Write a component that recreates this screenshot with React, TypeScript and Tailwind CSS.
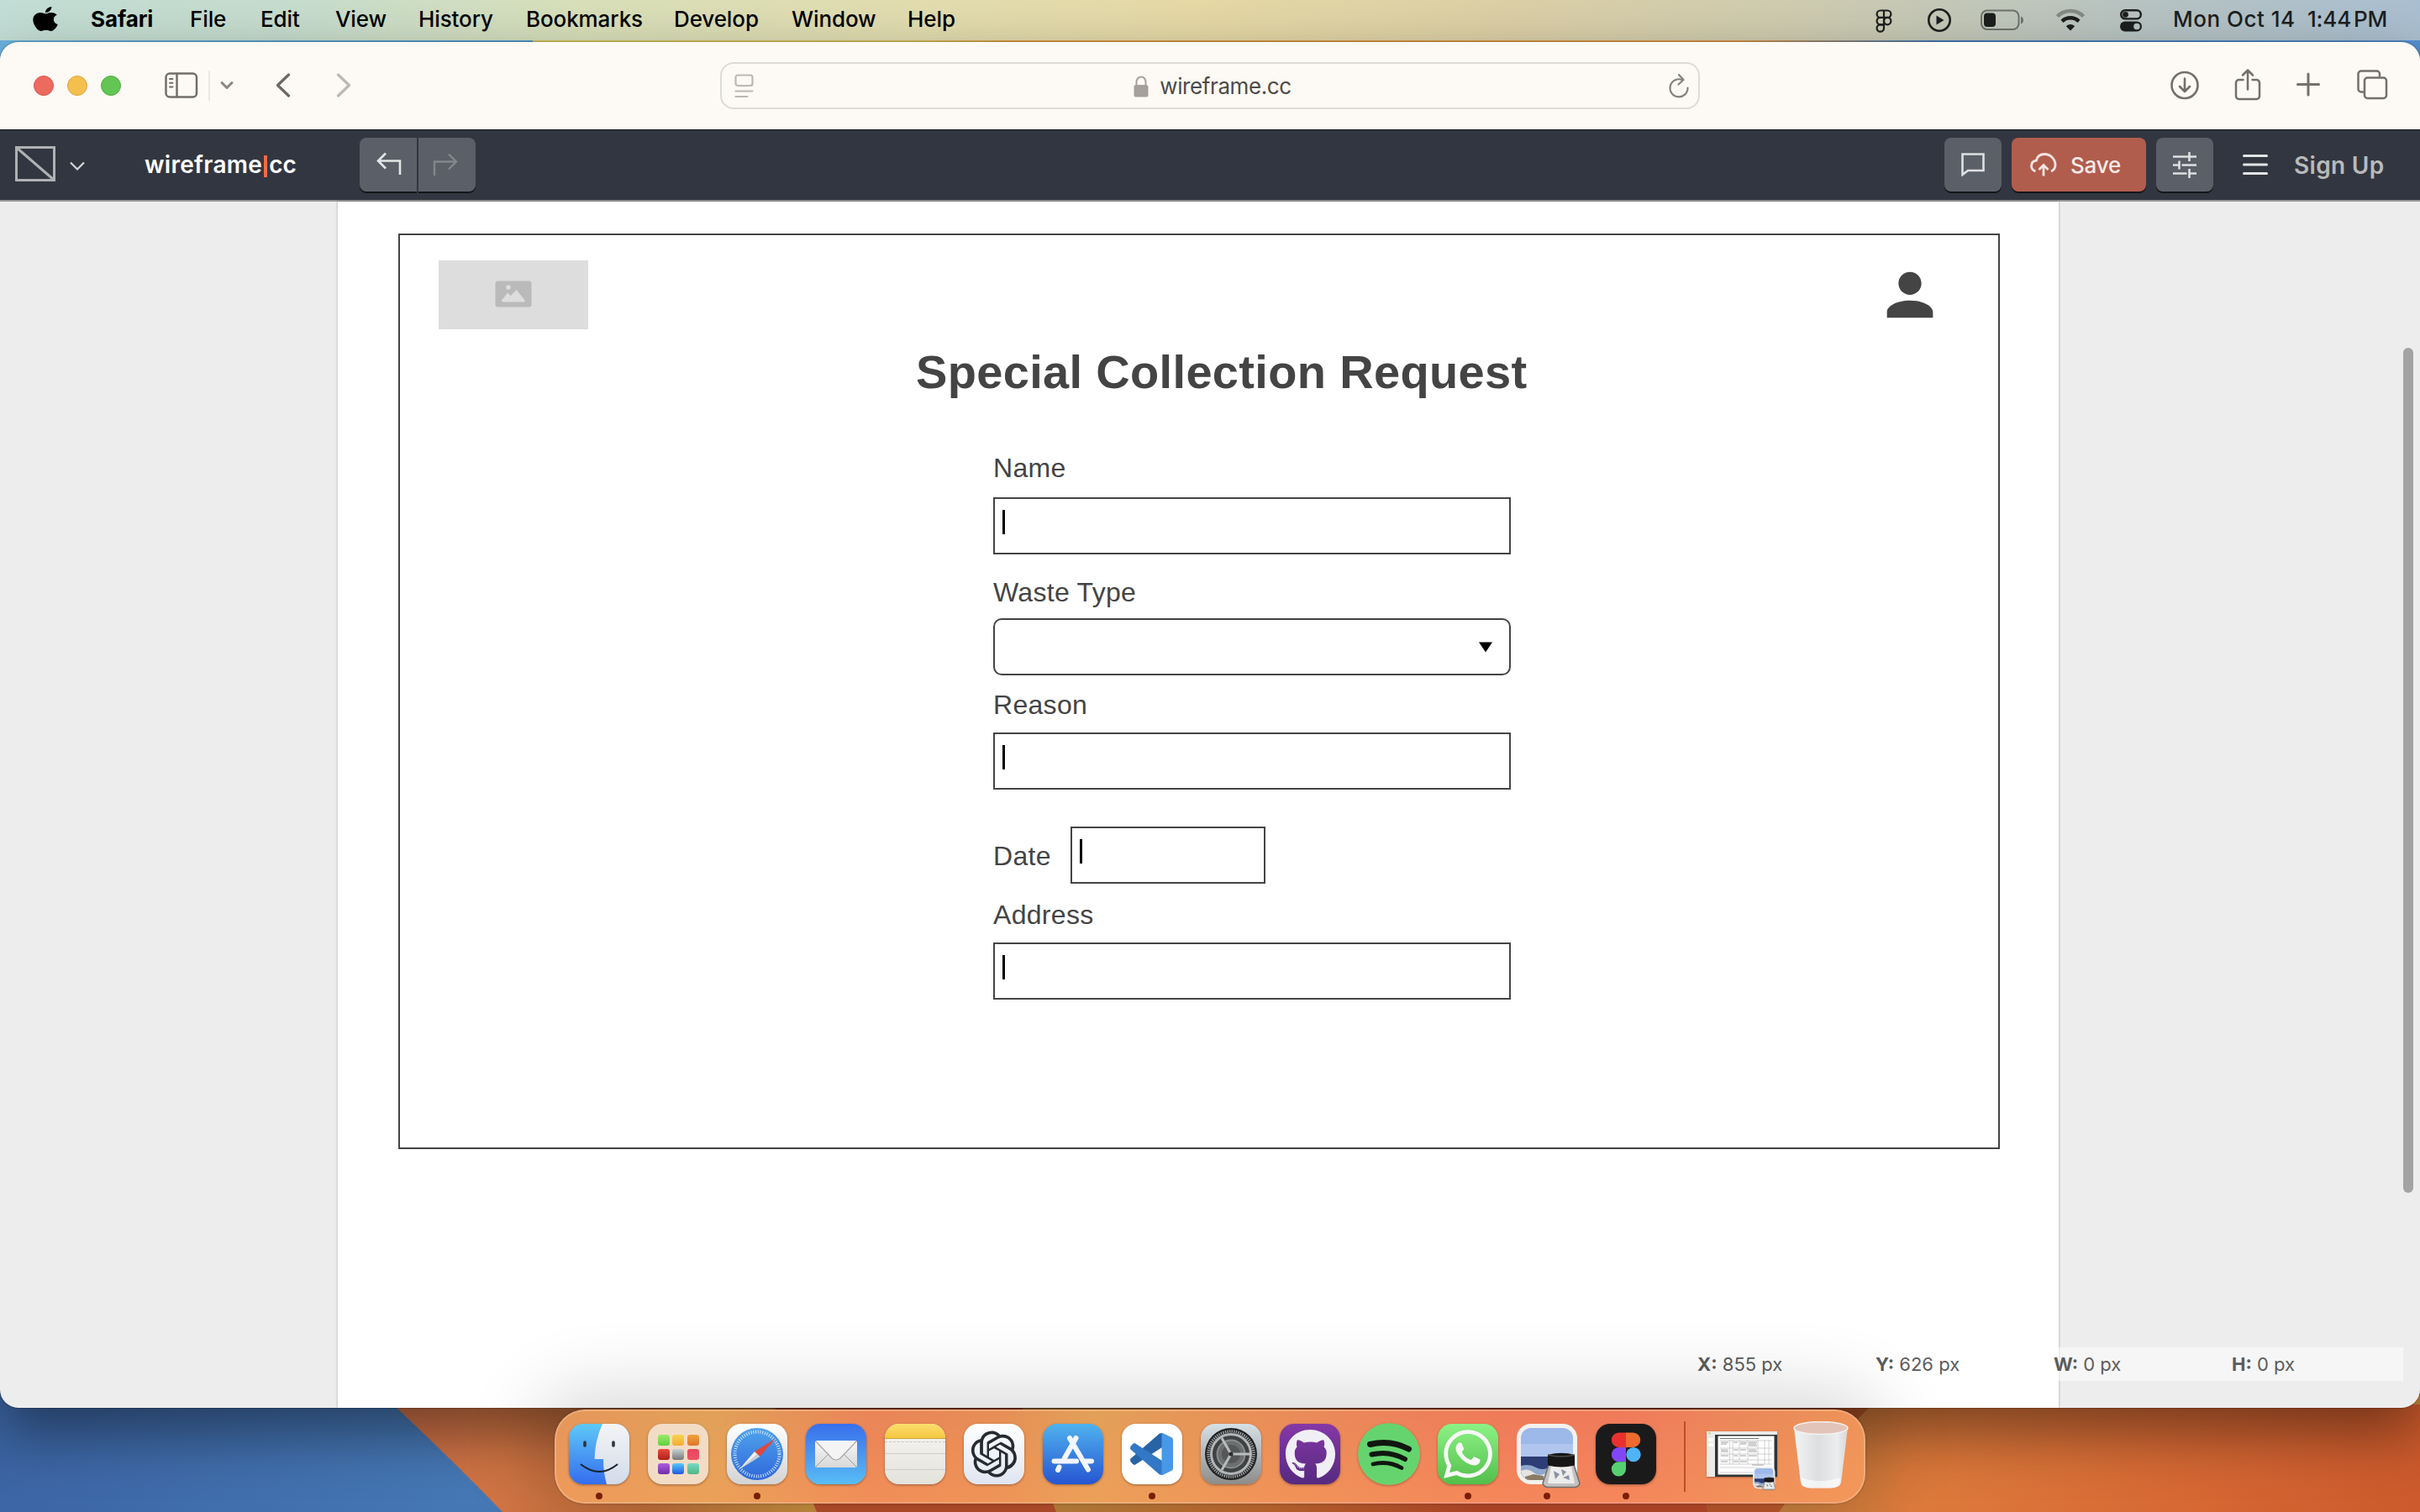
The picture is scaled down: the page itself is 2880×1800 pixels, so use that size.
import React from "react";
import { FaApple, FaGithub, FaWhatsapp } from "react-icons/fa";
import { RiOpenaiFill } from "react-icons/ri";

/* ---------- desktop wallpaper ---------- */

function Wallpaper() {
  return (
    <svg className="absolute inset-0" width="2880" height="1800" viewBox="0 0 2880 1800">
      <defs>
        <linearGradient id="wpBlue" x1="0" y1="0" x2="1" y2="0">
          <stop offset="0" stopColor="#3c65a4" />
          <stop offset="1" stopColor="#4679b5" />
        </linearGradient>
        <linearGradient id="wpOrange" x1="475" y1="0" x2="972" y2="0" gradientUnits="userSpaceOnUse">
          <stop offset="0" stopColor="#cc7048" />
          <stop offset="0.25" stopColor="#d27544" />
          <stop offset="0.6" stopColor="#c3703a" />
          <stop offset="1" stopColor="#c8913f" />
        </linearGradient>
        <linearGradient id="wpAmber" x1="1257" y1="0" x2="1760" y2="0" gradientUnits="userSpaceOnUse">
          <stop offset="0" stopColor="#c0843c" />
          <stop offset="0.5" stopColor="#c46a30" />
          <stop offset="1" stopColor="#ba4a2a" />
        </linearGradient>
        <linearGradient id="wpRight" x1="2100" y1="0" x2="2880" y2="0" gradientUnits="userSpaceOnUse">
          <stop offset="0" stopColor="#c5813e" />
          <stop offset="0.22" stopColor="#de7b3c" />
          <stop offset="0.6" stopColor="#d76a35" />
          <stop offset="1" stopColor="#cc5a2c" />
        </linearGradient>
        <linearGradient id="wpTop" x1="0" y1="0" x2="1" y2="0">
          <stop offset="0" stopColor="#6cb2e0" />
          <stop offset="0.22" stopColor="#5a9fd0" />
          <stop offset="0.2201" stopColor="#dccb63" />
          <stop offset="0.38" stopColor="#d9c45c" />
          <stop offset="0.42" stopColor="#e0a044" />
          <stop offset="0.72" stopColor="#dd9a4c" />
          <stop offset="0.8" stopColor="#4a80be" />
          <stop offset="1" stopColor="#5590d0" />
        </linearGradient>
      </defs>
      <rect width="2880" height="900" fill="url(#wpTop)" />
      <rect y="900" width="2880" height="900" fill="url(#wpOrange)" />
      <path d="M0 900H300V1500Q400 1590 472 1676Q540 1740 598 1800H0Z" fill="url(#wpBlue)" />
      <path d="M920 1670L972 1800H1257L1215 1670Z" fill="#b9502c" />
      <path d="M1215 1670L1257 1800H2060L2010 1670Z" fill="url(#wpAmber)" />
      <path d="M2010 1670L2032 1800H2118Q2160 1740 2228 1676V1670Z" fill="#bd582c" />
      <path d="M2117 1800Q2160 1740 2228 1672H2880V1800Z" fill="url(#wpRight)" />
    </svg>
  );
}

/* ---------- menu bar ---------- */

function MenuBar() {
  return (
    <div className="relative flex h-12 shrink-0 bg-[linear-gradient(90deg,#c2ddd5_0%,#c6dccd_12%,#d8dfb9_24%,#e2dcaf_38%,#e5d8a5_50%,#dccfa6_62%,#cdcbb0_75%,#b9c4c0_87%,#a9bed0_100%)] text-[26px] leading-[46px] font-[450] tracking-[-0.1px] text-black">
      <div className="flex w-[108px] justify-start pt-[6px] pl-[39px]">
        <FaApple className="h-[33px] w-[30px]" preserveAspectRatio="none" />
      </div>
      <div className="w-[118px] font-bold">Safari</div>
      <div className="w-[84px]">File</div>
      <div className="w-[89px]">Edit</div>
      <div className="w-[99px]">View</div>
      <div className="w-[128px]">History</div>
      <div className="w-[176px]">Bookmarks</div>
      <div className="w-[140px]">Develop</div>
      <div className="w-[138px]">Window</div>
      <div>Help</div>
      <div className="ml-auto flex h-12 items-center text-[#1d1f1e]">
        <svg width="20" height="28" viewBox="0 0 20 28" fill="none" stroke="currentColor" strokeWidth="2.2" className="mt-[2px] mr-[41px]">
          <path d="M10 1.5H5.8a4.2 4.2 0 0 0 0 8.4H10zM10 1.5h4.2a4.2 4.2 0 0 1 0 8.4H10zM10 9.9H5.8a4.2 4.2 0 0 0 0 8.4H10z" />
          <path d="M5.800 18.300a4.200 4.200 0 1 0 4.200 4.200v-4.200z" />
          <circle cx="14.200" cy="14.100" r="4.200" />
        </svg>
        <svg width="30" height="30" viewBox="0 0 30 30" fill="none" stroke="currentColor" strokeWidth="2.600" className="mr-[34px]">
          <circle cx="15" cy="15" r="12.700" />
          <path d="M11.500 9.500v11l9-5.500z" fill="currentColor" stroke="none" />
        </svg>
        <svg width="52" height="26" viewBox="0 0 52 26" fill="none" className="mr-[37px]">
          <rect x="1" y="1.500" width="44.500" height="22.500" rx="7" stroke="#1d1f1e" strokeOpacity="0.5" strokeWidth="2" />
          <rect x="4" y="4.500" width="14" height="16.500" rx="4" fill="currentColor" />
          <path d="M48 8.500q3 1.500 3 4.500t-3 4.500z" fill="#1d1f1e" fillOpacity="0.5" />
        </svg>
        <svg width="36" height="28" viewBox="0 0 36 28" fill="none" strokeWidth="4.500" className="mr-[40px]">
          <path d="M2.500 9.500a22 22 0 0 1 31 0" stroke="#1d1f1e" strokeOpacity="0.35" />
          <path d="M8 15.300a14.500 14.500 0 0 1 20 0" stroke="currentColor" />
          <path d="M18 26.500l-5.200-5.300a7.500 7.500 0 0 1 10.400 0z" fill="currentColor" />
        </svg>
        <svg width="28" height="28" viewBox="0 0 28 28" fill="none" className="mr-[36px]">
          <rect x="2.200" y="2.200" width="23.600" height="10.200" rx="5.100" stroke="currentColor" strokeWidth="2.400" />
          <circle cx="7.500" cy="7.300" r="3.400" fill="currentColor" />
          <rect x="1" y="15.500" width="26" height="12" rx="6" fill="currentColor" />
          <circle cx="21" cy="21.500" r="3.800" fill="#b5c2c4" />
        </svg>
        <div className="flex w-[294px] pb-[2px] whitespace-nowrap">
          <span className="w-[160px] tracking-[0.5px]">Mon Oct 14</span>
          <span className="tracking-[-0.2px]">1:44<span className="ml-[3px]">PM</span></span>
        </div>
      </div>
    </div>
  );
}

/* ---------- browser toolbar ---------- */

function BrowserBar() {
  return (
    <div className="flex h-[104px] shrink-0 items-center bg-[#fdf9f4]">
      <div className="ml-10 flex w-[156px] gap-4">
        <div className="size-6 rounded-full border border-[#d9554a] bg-[#ed6a5f]" />
        <div className="size-6 rounded-full border border-[#dba53c] bg-[#f5bf4f]" />
        <div className="size-6 rounded-full border border-[#4fae3d] bg-[#62c554]" />
      </div>
      <svg width="40" height="32" viewBox="0 0 40 32" fill="none" stroke="#726e6a" strokeWidth="2.500" strokeLinecap="round">
        <rect x="1.500" y="1.500" width="36.500" height="28" rx="4.500" />
        <path d="M14.500 2v27" />
        <path d="M6 8h3.500M6 12.700h3.500M6 17.400h3.500" strokeWidth="2" />
      </svg>
      <div className="ml-[12px] h-9 w-[2px] bg-[#ece8e3]" />
      <svg width="18" height="12" viewBox="0 0 18 12" fill="none" stroke="#8a8682" strokeWidth="3" strokeLinecap="round" strokeLinejoin="round" className="ml-[11px]">
        <path d="M3 2.500l6 6 6-6" />
      </svg>
      <svg width="18" height="30" viewBox="0 0 18 30" fill="none" stroke="#6b6763" strokeWidth="3.200" strokeLinecap="round" strokeLinejoin="round" className="ml-[49px]">
        <path d="M15.500 2L2.500 14.500l13 12.500" />
      </svg>
      <svg width="18" height="30" viewBox="0 0 18 30" fill="none" stroke="#bcb8b4" strokeWidth="3.200" strokeLinecap="round" strokeLinejoin="round" className="ml-[54px]">
        <path d="M2.500 2l13 12.500L2.500 27" />
      </svg>
      <div className="ml-[439px] flex h-[56px] w-[1166px] items-center justify-between rounded-[16px] border-2 border-[#dedad6] pr-[10px] pl-[15px]">
        <svg width="24" height="30" viewBox="0 0 24 30" fill="none" stroke="#bbb7b3" strokeWidth="2.200" strokeLinecap="round">
          <rect x="1.500" y="2.500" width="20" height="12.500" rx="2.500" />
          <path d="M1.500 21.500h20M1.500 28h14" />
        </svg>
        <div className="flex items-center pl-[3px]">
          <svg width="18" height="26" viewBox="0 0 18 26" className="mt-[2px] mr-[13px]">
            <path d="M3.500 12V7.500a5.500 6 0 0 1 11 0V12" fill="none" stroke="#a5a09c" strokeWidth="2" />
            <rect x="0.500" y="11" width="17" height="14.500" rx="2.500" fill="#a5a09c" />
          </svg>
          <span className="mt-[2px] text-[26px] leading-[30px] tracking-[-0.4px] text-[#4c4b4a]">wireframe.cc</span>
        </div>
        <svg width="26" height="30" viewBox="0 0 26 30" fill="none" stroke="#85817d" strokeWidth="2.200" strokeLinecap="round" strokeLinejoin="round">
          <path d="M17.500 8.300A10.500 10.500 0 1 0 23.500 17.500" />
          <path d="M13 2l5.500 6-6 5.500" />
        </svg>
      </div>
      <svg width="36" height="36" viewBox="0 0 36 36" fill="none" stroke="#736f6b" strokeWidth="2.600" strokeLinecap="round" strokeLinejoin="round" className="ml-[559px]">
        <circle cx="18" cy="17.500" r="15.500" />
        <path d="M18 9.500V24.500M12 19l6 6 6-6" />
      </svg>
      <svg width="32" height="40" viewBox="0 0 32 40" fill="none" stroke="#736f6b" strokeWidth="2.500" strokeLinecap="round" strokeLinejoin="round" className="mt-[-2px] ml-[41px]">
        <path d="M10.500 14H5.500a3.500 3.500 0 0 0-3.500 3.500V33.500a3.500 3.500 0 0 0 3.500 3.500h21a3.500 3.500 0 0 0 3.500-3.500V17.500a3.500 3.500 0 0 0-3.500-3.500h-5" />
        <path d="M16 25.500V2.500M10 8.500l6-6 6 6" />
      </svg>
      <svg width="28" height="30" viewBox="0 0 28 30" fill="none" stroke="#736f6b" strokeWidth="3" strokeLinecap="round" className="mt-[-2px] ml-[42px]">
        <path d="M14 2v25M1.500 14.500h25" />
      </svg>
      <svg width="38" height="38" viewBox="0 0 38 38" fill="none" stroke="#736f6b" strokeWidth="2.500" strokeLinejoin="round" className="mt-[-2px] ml-[43px]">
        <path d="M9 27.500H6a3.500 3.500 0 0 1-3.500-3.500V6a3.500 3.500 0 0 1 3.500-3.500H24.500a3.500 3.500 0 0 1 3.500 3.500v3.500" />
        <rect x="10" y="10.500" width="26" height="24.500" rx="3.500" />
      </svg>
    </div>
  );
}

/* ---------- editor toolbar ---------- */

function EditorBar() {
  return (
    <div className="flex h-[86px] shrink-0 items-center border-t border-b-2 border-t-[#0d1016] border-b-[#979797] bg-[#323640] pb-px">
      <svg width="48" height="42" viewBox="0 0 48 42" fill="none" stroke="#afb1b3" strokeWidth="3" className="mt-[-2px] ml-[18px]">
        <rect x="1.500" y="1.500" width="45" height="39" />
        <path d="M2 2l44 38" />
      </svg>
      <svg width="18" height="12" viewBox="0 0 18 12" fill="none" stroke="#d5d6d8" strokeWidth="2.200" className="mt-[4px] ml-[17px]">
        <path d="M1 1.500l8 8 8-8" />
      </svg>
      <div className="ml-[71px] flex items-center text-[28px] leading-[40px] font-semibold text-white">
        <span className="tracking-[0.3px]">wireframe</span>
        <span className="mx-[2px] mt-[3px] h-[26px] w-[4px] bg-[#f26b4b]" />
        <span>cc</span>
      </div>
      <div className="ml-auto" />
      <div className="flex items-center gap-3">
        <div className="flex h-16 w-[68px] items-center justify-center rounded-[8px] bg-[#5b5f68] shadow-[0_2px_0_#14161b]">
          <svg width="28" height="28" viewBox="0 0 28 28" fill="none" stroke="#dfe0e2" strokeWidth="2.600">
            <path d="M1.500 1.500h25v19.500H8L1.500 26z" />
          </svg>
        </div>
        <div className="flex h-16 w-40 items-center rounded-[8px] bg-[#b15d4d] pl-[22px] shadow-[0_2px_0_#14161b]">
          <svg width="32" height="28" viewBox="0 0 32 28" fill="none" stroke="#f3e4e1" strokeWidth="2.800">
            <path d="M6.500 22C3.500 21 1.500 18.500 1.500 15.500c0-3.500 2.500-6 6-6.500C8.500 4.500 12 1.500 17 1.500 24 1.500 30 7 30 14.500c0 3.500-2 6-5 7.500" />
            <path d="M16 27.500V14.500M10.500 20l5.500-5.500 5.500 5.500" />
          </svg>
          <span className="mt-px ml-[16px] text-[26px] leading-[40px] font-medium tracking-[-0.2px] text-[#f5eae8]">Save</span>
        </div>
        <div className="flex h-16 w-[68px] items-center justify-center rounded-[8px] bg-[#5b5f68] shadow-[0_2px_0_#14161b]">
          <svg width="28" height="32" viewBox="0 0 28 32" fill="none" stroke="#dfe0e2" strokeWidth="2.600">
            <path d="M0 6.500h19.500M19.500 1v11M19.500 6.500H28M0 16.500h7.500M7.500 11.500v10M10.500 16.500H28M0 26.500h16.500M19.500 21v11M19.500 26.500H28" />
          </svg>
        </div>
      </div>
      <svg width="30" height="26" viewBox="0 0 30 26" stroke="#e3e4e5" strokeWidth="3" strokeLinecap="round" className="ml-[35px]">
        <path d="M1.500 2.500h27M1.500 13h27M1.500 23.500h27" />
      </svg>
      <span className="mt-px ml-[31px] w-[150px] text-[28px] leading-[40px] font-semibold tracking-[0.3px] text-[#b9babb]">Sign Up</span>
    </div>
  );
}

function HistoryButtons() {
  return (
    <div className="absolute top-[114px] left-[428px] flex gap-[2px]">
      <div className="flex h-16 w-[68px] items-center justify-center rounded-l-[8px] bg-[#5b5f68] shadow-[0_2px_0_#14161b]">
        <svg width="30" height="28" viewBox="0 0 30 28" fill="none" stroke="#e3e5e6" strokeWidth="2.600" className="mt-[-2px] ml-px">
          <path d="M28 27V10.500H2M11 1.500l-9 9 9 9" />
        </svg>
      </div>
      <div className="flex h-16 w-[68px] items-center justify-center rounded-r-[8px] bg-[#5b5f68] shadow-[0_2px_0_#14161b]">
        <svg width="30" height="28" viewBox="0 0 30 28" fill="none" stroke="#83868a" strokeWidth="2.400" className="mr-[4px]">
          <path d="M2 27V10.500H28M19 1.500l9 9-9 9" />
        </svg>
      </div>
    </div>
  );
}

/* ---------- wireframe page ---------- */

function Label({ children }: { children: React.ReactNode }) {
  return <div className="h-10 text-[32px] leading-[40px] tracking-[0.3px] text-[#444]">{children}</div>;
}

function TextBox({ className }: { className: string }) {
  return (
    <div className={"h-[68px] border-2 border-[#444] bg-white pt-[13px] pl-[9px] " + className}>
      <div className="h-[29px] w-[3px] bg-black" />
    </div>
  );
}

function RequestForm() {
  return (
    <div className="h-[1090px] w-[1906px] border-2 border-[#444] bg-white font-['Liberation_Sans',sans-serif]">
      <div className="flex items-start justify-between pt-[30px] pr-[64px] pl-[46px]">
        <div className="flex h-[82px] w-[178px] items-center justify-center bg-[#ddd]">
          <svg width="44" height="32" viewBox="0 0 44 32" className="mt-[-2px]">
            <rect x="0.500" y="0.500" width="43" height="31" rx="3" fill="#bababa" />
            <circle cx="16" cy="8" r="2.800" fill="#ddd" />
            <path d="M8 23.500l7.200-9 3.600 3.800 6.700-7.300 10.300 12.500q.5 2-1.500 2H9.500q-2 0-1.500-2z" fill="#ddd" />
          </svg>
        </div>
        <svg width="82" height="82" viewBox="0 0 24 24" fill="#444">
          <path d="M12 12c2.210 0 4-1.790 4-4s-1.790-4-4-4-4 1.790-4 4 1.790 4 4 4zm0 2c-4.600 0-8 2-8 4v2h16v-2c0-2-3.400-4-8-4z" />
        </svg>
      </div>
      <h1 className="mt-[19px] ml-[614px] h-16 text-[56px] leading-[64px] font-bold tracking-[0.33px] text-[#444]">
        Special Collection Request
      </h1>
      <div className="mt-[62px] ml-[706px] w-[616px]">
        <Label>Name</Label>
        <TextBox className="mt-[15px]" />
        <div className="mt-[25px]"><Label>Waste Type</Label></div>
        <div className="mt-[11px] flex h-[68px] items-center justify-end rounded-[10px] border-2 border-[#444] bg-white pr-[20px]">
          <svg width="16" height="13" viewBox="0 0 16 13"><path d="M0 0.500h16L8 12.500z" fill="#000" /></svg>
        </div>
        <div className="mt-[15px]"><Label>Reason</Label></div>
        <TextBox className="mt-[13px]" />
        <div className="mt-[44px] flex">
          <div className="w-[92px] pt-[15px]"><Label>Date</Label></div>
          <TextBox className="w-[232px]" />
        </div>
        <div className="mt-[17px]"><Label>Address</Label></div>
        <TextBox className="mt-[13px]" />
      </div>
    </div>
  );
}

function StatusItem({ name, value }: { name: string; value: string }) {
  return (
    <div className="w-[212px] shrink-0">
      <b className="font-bold">{name}:</b> {value}
    </div>
  );
}

function Canvas() {
  return (
    <div className="relative flex flex-1 justify-start bg-[#ededed] pl-[402px]">
      <div className="w-[2048px] bg-white pt-[38px] pl-[72px] shadow-[0_0_3px_rgba(0,0,0,0.3)]">
        <RequestForm />
      </div>
      <div className="absolute right-[8px] top-[174px] h-[1006px] w-[12px] rounded-full bg-[#a3a3a3]" />
      <div className="absolute bottom-[32px] left-[2000px] flex h-10 w-[860px] bg-white/50 pl-[20px] text-[22px] leading-[40px] text-[#5c5c5c]">
        <StatusItem name="X" value="855 px" />
        <StatusItem name="Y" value="626 px" />
        <StatusItem name="W" value="0 px" />
        <StatusItem name="H" value="0 px" />
      </div>
    </div>
  );
}

/* ---------- dock ---------- */

const tile = "size-[72px] rounded-[17px] shadow-[0_1px_3px_rgba(0,0,0,0.35)] overflow-hidden";

function FinderIcon() {
  return (
    <svg className={tile} viewBox="0 0 72 72">
      <defs>
        <linearGradient id="fa" x1="0" y1="0" x2="0" y2="1"><stop offset="0" stopColor="#5ec8f7" /><stop offset="1" stopColor="#356df0" /></linearGradient>
        <linearGradient id="fb" x1="0" y1="0" x2="0" y2="1"><stop offset="0" stopColor="#f4f4f6" /><stop offset="1" stopColor="#d2dbe9" /></linearGradient>
      </defs>
      <rect width="72" height="72" fill="url(#fa)" />
      <path d="M40 0Q31 20 30.500 42H41Q41 58 45 72H72V0Z" fill="url(#fb)" />
      <path d="M19 22v4M53 22v4" stroke="#2b3542" strokeWidth="3.600" strokeLinecap="round" />
      <path d="M14.500 48.500q22 17 43 0" fill="none" stroke="#17222f" strokeWidth="2" strokeLinecap="round" />
    </svg>
  );
}

function LaunchpadIcon() {
  return (
    <div className={tile + " grid grid-cols-[14px_14px_14px] content-center justify-center gap-x-[3.500px] gap-y-[4px] bg-[#f3dcc5]"}>
      <div className="h-[13px] rounded-[3px] bg-linear-to-b from-[#9bea6c] to-[#5fcf3c]" />
      <div className="h-[13px] rounded-[3px] bg-linear-to-b from-[#f8d34c] to-[#f0ae35]" />
      <div className="h-[13px] rounded-[3px] bg-linear-to-b from-[#eda33c] to-[#e0752e]" />
      <div className="h-[13px] rounded-[3px] bg-linear-to-b from-[#e8493c] to-[#b01f18]" />
      <div className="h-[13px] rounded-[3px] bg-linear-to-b from-[#c8d2d6] to-[#78787a]" />
      <div className="h-[13px] rounded-[3px] bg-linear-to-b from-[#ea4560] to-[#ee5266]" />
      <div className="h-[13px] rounded-[3px] bg-linear-to-b from-[#ad5fe0] to-[#6f2bab]" />
      <div className="h-[13px] rounded-[3px] bg-linear-to-b from-[#5cc8fa] to-[#2854e0]" />
      <div className="h-[13px] rounded-[3px] bg-linear-to-b from-[#78d8c4] to-[#4fb684]" />
    </div>
  );
}

function SafariIcon() {
  return (
    <svg className={tile} viewBox="0 0 72 72">
      <defs>
        <linearGradient id="sa" x1="0" y1="0" x2="0" y2="1"><stop offset="0" stopColor="#fff" /><stop offset="1" stopColor="#d3d3d5" /></linearGradient>
        <linearGradient id="sb" x1="0" y1="0" x2="0" y2="1"><stop offset="0" stopColor="#4fa3ec" /><stop offset="1" stopColor="#2f68da" /></linearGradient>
      </defs>
      <rect width="72" height="72" fill="url(#sa)" />
      <circle cx="36" cy="36" r="31" fill="url(#sb)" />
      <circle cx="36" cy="36" r="26.500" fill="none" stroke="#d7e8fb" strokeWidth="4" strokeDasharray="1 1.775" />
      <path d="M58 17.500L33 33l6 6z" fill="#e2473b" />
      <path d="M15 54l18-21 6 6z" fill="#f2f2f2" />
      <path d="M15 54l21-18 3 3z" fill="#c9ccd0" />
    </svg>
  );
}

function MailIcon() {
  return (
    <svg className={tile} viewBox="0 0 72 72">
      <defs>
        <linearGradient id="ma" x1="0" y1="0" x2="0" y2="1"><stop offset="0" stopColor="#396fec" /><stop offset="1" stopColor="#58bdf5" /></linearGradient>
        <linearGradient id="mb" x1="0" y1="0" x2="0" y2="1"><stop offset="0" stopColor="#f7f7f7" /><stop offset="1" stopColor="#d8d8d8" /></linearGradient>
      </defs>
      <rect width="72" height="72" fill="url(#ma)" />
      <rect x="11" y="20" width="50" height="32" rx="2.500" fill="url(#mb)" />
      <path d="M12 51l15-15M60 51L45 36" stroke="#9a9a9a" strokeWidth="1" />
      <path d="M12 21l19 20q5 4 10 0l19-20" fill="#f4f4f4" stroke="#a5a5a5" strokeWidth="1.200" />
    </svg>
  );
}

function NotesIcon() {
  return (
    <div className={tile + " flex flex-col bg-linear-to-b from-[#f7f6f4] to-[#e3e2db]"}>
      <div className="h-[18px] border-b border-[#c9a73c] bg-linear-to-b from-[#fadf6c] to-[#f6c63f]" />
      <div className="mt-[3px] border-t border-dashed border-[#c9c8c4]" />
      <div className="mt-[13px] h-px bg-[#cfcecb]" />
      <div className="mt-[18px] h-px bg-[#cfcecb]" />
    </div>
  );
}

function AppStoreIcon() {
  return (
    <svg className={tile} viewBox="0 0 72 72">
      <defs>
        <linearGradient id="aa" x1="0" y1="0" x2="0" y2="1"><stop offset="0" stopColor="#50b2ee" /><stop offset="1" stopColor="#2655d2" /></linearGradient>
      </defs>
      <rect width="72" height="72" fill="url(#aa)" />
      <g stroke="#f2f6fd" strokeWidth="6" strokeLinecap="round">
        <path d="M13.500 44.500H40M51 44.500h7" />
        <path d="M32 17l22 37.500" />
        <path d="M39.500 17L25.500 41.500M19.500 51.500L18 55" />
      </g>
    </svg>
  );
}

function CodeIcon() {
  return (
    <svg className={tile} viewBox="0 0 72 72">
      <rect width="72" height="72" fill="#fff" />
      <path d="M48 11v17L15.500 49q-2 0-5-4-1-2 0-3.500L45 11.500z" fill="#2863a6" />
      <path d="M48 61V44L15.500 23q-2 0-5 4-1 2 0 3.500L45 60.500z" fill="#3278c6" />
      <path d="M47.500 10.500L59 16q2 1 2 3v34q0 2-2 3l-11.500 5.500z" fill="#4898e8" />
    </svg>
  );
}

function SettingsIcon() {
  return (
    <svg className={tile} viewBox="0 0 72 72">
      <defs>
        <linearGradient id="ga" x1="0" y1="0" x2="0" y2="1"><stop offset="0" stopColor="#d6e0e6" /><stop offset="1" stopColor="#8d8c8a" /></linearGradient>
      </defs>
      <rect width="72" height="72" fill="url(#ga)" />
      <circle cx="36" cy="36" r="31" fill="#222425" />
      <circle cx="36" cy="36" r="27" fill="none" stroke="#a5aaac" strokeWidth="3.500" strokeDasharray="1.300 1.300" />
      <circle cx="36" cy="36" r="23.500" fill="#3f4142" stroke="#b2b6b8" strokeWidth="3" />
      <circle cx="36" cy="36" r="16.500" fill="#6c6e6f" stroke="#8a8d8e" strokeWidth="2" />
      <circle cx="36" cy="36" r="11" fill="#555758" />
      <path d="M36 36h23M36 36L25 17M36 36L25 55" stroke="#b9bdbf" strokeWidth="3" />
      <circle cx="36" cy="36" r="2.500" fill="#2b2d2e" />
    </svg>
  );
}

function SpotifyIcon() {
  return (
    <svg className="size-[74px] rounded-full shadow-[0_1px_3px_rgba(0,0,0,0.3)]" viewBox="0 0 74 74">
      <circle cx="37" cy="37" r="37" fill="#65d46e" />
      <g fill="none" stroke="#10170f" strokeLinecap="round">
        <path d="M14.500 25.500q24-6 46 5.500" strokeWidth="7" />
        <path d="M16.500 37.500q21-5 39.500 5.500" strokeWidth="6" />
        <path d="M18 49q18-4.500 34 4.500" strokeWidth="4.800" />
      </g>
    </svg>
  );
}

function PreviewIcon({ className }: { className: string }) {
  return (
    <svg className={className} viewBox="0 0 76 82">
      <rect width="72" height="72" rx="17" fill="#f3f1ef" />
      <clipPath id="photo"><rect x="5" y="5" width="62" height="62" rx="12" /></clipPath>
      <g clipPath="url(#photo)">
        <rect x="5" y="5" width="62" height="62" fill="#9db9ea" />
        <rect x="5" y="24" width="62" height="16" fill="#b0c6ee" />
        <rect x="5" y="39" width="62" height="30" fill="#2c3e75" />
        <path d="M5 50q10-3 18 2t20-2v20H5z" fill="#8fa8cc" />
        <path d="M5 56q8-4 15 2t16 0v12H5z" fill="#e6e4e2" />
        <path d="M10 63l10-3 12 2v6H10z" fill="#8b7c66" />
      </g>
      <path d="M38 49h30l7 22q-1 4-6 4.500H37q-5-.5-6-4.500z" fill="#c3c1bf" stroke="#6f6c6a" strokeWidth="1.500" />
      <path d="M41 50h24l4 21H37z" fill="#ececec" />
      <path d="M44 56l7 4-5 6zM53 54l6 3-4 5zM55 64l7-3 1 6z" fill="#8992a3" />
      <path d="M37 37q16-4.500 32 0v12.500q-16 4-32 0z" fill="#161616" />
      <path d="M37 37q16 4 32 0" fill="none" stroke="#4a4a4a" strokeWidth="1.500" />
    </svg>
  );
}

function FigmaIcon() {
  return (
    <svg className={tile} viewBox="0 0 72 72">
      <rect width="72" height="72" fill="#1b1a1b" />
      <path d="M36 10.500h-8.500a8.700 8.700 0 0 0 0 17.400H36z" fill="#e8312f" />
      <path d="M36 10.500h8.500a8.700 8.700 0 0 1 0 17.400H36z" fill="#ee6a2f" />
      <path d="M36 27.900h-8.500a8.700 8.700 0 0 0 0 17.400H36z" fill="#8247f5" />
      <circle cx="45" cy="36.600" r="8.700" fill="#4db4f8" />
      <path d="M36 45.300h-8.500a8.600 8.600 0 1 0 8.500 8.600z" fill="#56cf72" />
    </svg>
  );
}

function MinimizedWindow() {
  return (
    <div className="relative mt-[9px] h-[54px] w-[84px]">
      <svg width="84" height="54" viewBox="0 0 84 54" className="shadow-[0_1px_2px_rgba(0,0,0,0.3)]">
        <rect width="84" height="54" fill="#eceae6" />
        <rect x="10" y="4" width="74" height="50" fill="#2d3334" />
        <rect x="13.500" y="5.500" width="67" height="46" fill="#fdfdfd" />
        <path d="M2 2h3" stroke="#b9c46a" strokeWidth="1.200" />
        <path d="M16 8.500h46" stroke="#777" strokeWidth="1.200" />
        <path d="M16 11h62M16 20h62M16 27h62M16 34h62M16 39h62M16 43h62M16 49h62" stroke="#bbb" strokeWidth="0.600" />
        <path d="M27.500 10v29M31 10v29M39 10v29M49 10v29M61 10v29M69 10v29M74 10v29" stroke="#bbb" strokeWidth="0.600" />
        <path d="M17 13h9M17 15h7M32 13h5M40 13h8M40 15h7M50 13h10M50 15h9M50 17h10M17 22h8M17 24h9M32 22h6M40 22h7M50 22h9M50 24h10M17 29h9M32 29h5M40 29h7M50 29h10M17 36h8M32 36h6M40 36h8M54 40h14" stroke="#999" strokeWidth="0.900" />
        <path d="M2 8h6v4H2zM2 14h6v4H2z" fill="#fafafa" />
      </svg>
      <PreviewIcon className="absolute top-[42px] left-[55px] h-[30px] w-[28px]" />
    </div>
  );
}

function TrashIcon() {
  return (
    <svg width="66" height="80" viewBox="0 0 66 80">
      <defs>
        <linearGradient id="ta" x1="0" y1="0" x2="1" y2="0">
          <stop offset="0" stopColor="#f3f4f5" /><stop offset="0.450" stopColor="#dcdee0" /><stop offset="0.800" stopColor="#eceded" /><stop offset="1" stopColor="#d5d8da" />
        </linearGradient>
      </defs>
      <path d="M1 8l8 65q1 6 12 6.500h23q12-.5 13-6.500l8-65z" fill="url(#ta)" />
      <ellipse cx="33" cy="8" rx="32" ry="7.500" fill="#e3c4b8" stroke="#f4f2f1" strokeWidth="1.500" />
      <path d="M9.500 67q22 8 47 0l-1 7q-2 5-12 5.500H21Q12 79 10 74z" fill="#fff" fillOpacity="0.6" />
    </svg>
  );
}

function DockItem({ open, children }: { open?: boolean; children: React.ReactNode }) {
  return (
    <div className="flex w-[94px] flex-col items-center">
      <div className="flex h-[72px] items-center">{children}</div>
      {open && <div className="mt-[10px] size-2 rounded-full bg-[#7a1f04]" />}
    </div>
  );
}

function Dock() {
  return (
    <div className="relative mt-[2px] ml-[660px] flex h-[112px] w-[1560px] shrink-0 rounded-[36px] border-2 border-white/20 bg-[linear-gradient(180deg,rgba(255,160,90,0)_0%,rgba(255,160,90,0.35)_100%),linear-gradient(90deg,#e6965a_0%,#e1a158_12%,#ea8458_24%,#e68e56_34%,#e2a058_41%,#e89058_52%,#ef7a5a_72%,#f07a5b_82%,#ea8a5a_92%,#ee9358_100%)] pt-[15px] pl-[4px] shadow-[0_0_90px_20px_rgba(0,0,0,0.16),0_0_3px_rgba(0,0,0,0.3)]">
      <DockItem open><FinderIcon /></DockItem>
      <DockItem><LaunchpadIcon /></DockItem>
      <DockItem open><SafariIcon /></DockItem>
      <DockItem><MailIcon /></DockItem>
      <DockItem><NotesIcon /></DockItem>
      <DockItem>
        <div className={tile + " flex items-center justify-center bg-linear-to-b from-white to-[#dfe5f1]"}>
          <RiOpenaiFill className="size-[66px] text-[#262b30]" />
        </div>
      </DockItem>
      <DockItem><AppStoreIcon /></DockItem>
      <DockItem open><CodeIcon /></DockItem>
      <DockItem><SettingsIcon /></DockItem>
      <DockItem>
        <div className={tile + " flex items-center justify-center bg-linear-to-b from-[#8638a8] to-[#552a80]"}>
          <FaGithub className="size-[61px] text-[#f1eff6]" />
        </div>
      </DockItem>
      <DockItem><SpotifyIcon /></DockItem>
      <DockItem open>
        <div className={tile + " flex items-center justify-center bg-linear-to-b from-[#8cf285] to-[#53bf4a]"}>
          <FaWhatsapp className="size-[66px] text-[#f6f8f5]" />
        </div>
      </DockItem>
      <DockItem open>
        <div className="h-[72px] w-[72px]">
          <PreviewIcon className="h-[82px] w-[76px] max-w-none" />
        </div>
      </DockItem>
      <DockItem open><FigmaIcon /></DockItem>
      <div className="mt-[-3px] ml-[22px] h-[84px] w-[2px] bg-[#bf4f28]" />
      <div className="ml-[25px]"><MinimizedWindow /></div>
      <div className="mt-[-3px] ml-[19px]"><TrashIcon /></div>
    </div>
  );
}

export default function App() {
  return (
    <div className="relative flex h-[1800px] w-[2880px] flex-col overflow-hidden font-['Inter',sans-serif]">
      <Wallpaper />
      <MenuBar />
      <div className="relative mt-[2px] flex h-[1626px] shrink-0 flex-col overflow-visible rounded-[22px] shadow-[0_30px_70px_rgba(0,0,0,0.45),0_0_2px_rgba(0,0,0,0.6)]">
        <div className="flex flex-1 flex-col overflow-hidden rounded-[22px]">
          <BrowserBar />
          <EditorBar />
          <Canvas />
        </div>
        <HistoryButtons />
      </div>
      <Dock />
    </div>
  );
}
